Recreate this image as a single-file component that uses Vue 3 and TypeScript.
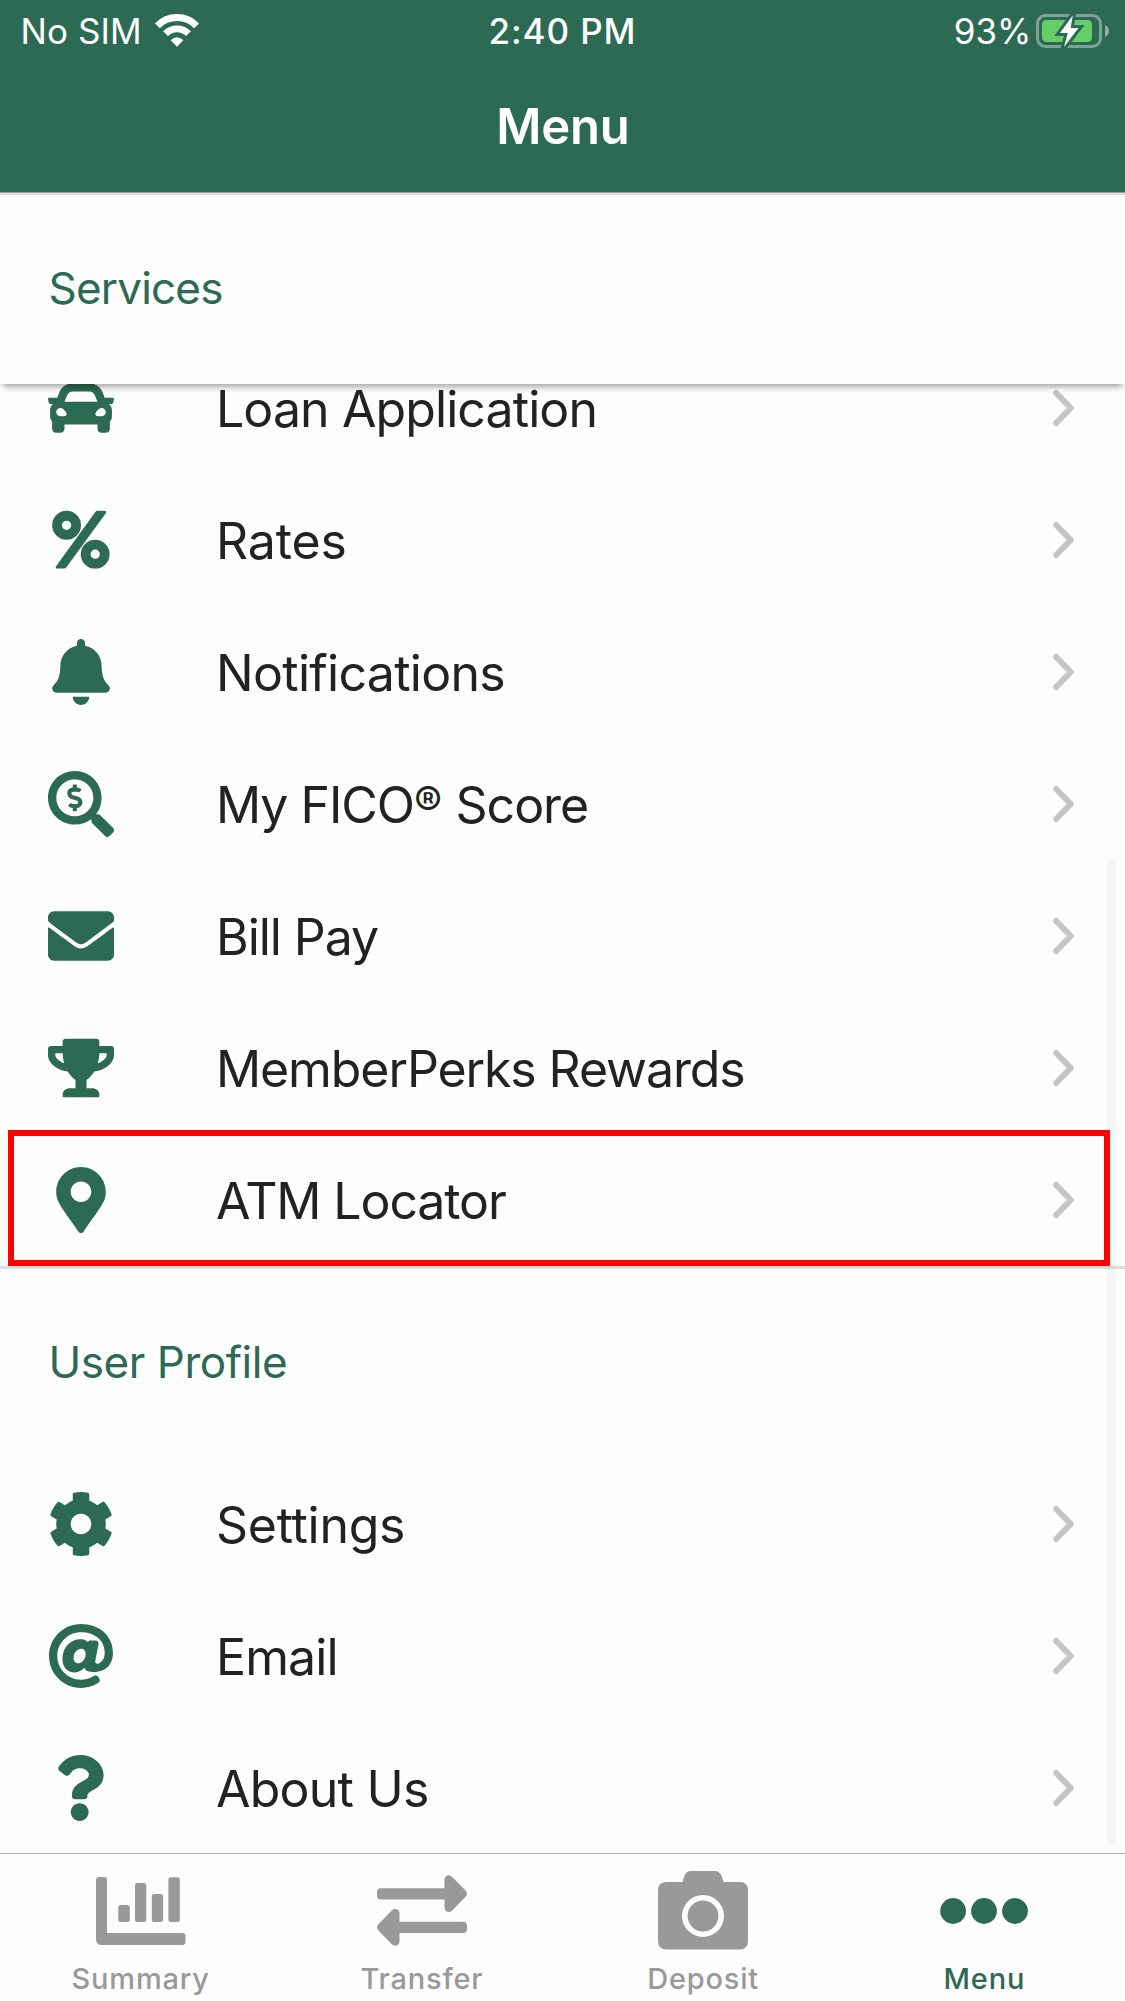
<script setup lang="ts">
interface MenuItem {
  label: string
  mark?: string
  rest?: string
  tracking: number
  viewBox: string
  paths: string[]
  highlighted?: boolean
}

const services: MenuItem[] = [
  {
    label: 'Loan Application',
    tracking: -0.9,
    viewBox: '0 0 512 512',
    paths: [
      'M499.99 176h-59.87l-16.64-41.6C406.38 91.63 365.57 64 319.5 64h-127c-46.06 0-86.88 27.63-103.99 70.4L71.87 176H12.01C4.2 176-1.53 183.34.37 190.91l6 24C7.7 220.25 12.5 224 18.01 224h20.07C24.65 235.73 16 252.78 16 272v48c0 16.12 6.16 30.67 16 41.93V416c0 17.67 14.33 32 32 32h32c17.67 0 32-14.33 32-32v-32h256v32c0 17.67 14.33 32 32 32h32c17.67 0 32-14.33 32-32v-54.07c9.84-11.25 16-25.8 16-41.93v-48c0-19.22-8.65-36.27-22.08-48H494c5.51 0 10.31-3.75 11.64-9.09l6-24c1.89-7.57-3.84-14.91-11.65-14.91zm-352.06-17.83c7.29-18.22 24.94-30.17 44.57-30.17h127c19.63 0 37.28 11.95 44.57 30.17L384 208H128l19.93-49.83zM96 319.8c-19.2 0-32-12.76-32-31.9S76.8 256 96 256s48 28.71 48 47.85-28.8 15.95-48 15.95zm320 0c-19.2 0-48 3.19-48-15.95S396.8 256 416 256s32 12.76 32 31.9-12.8 31.9-32 31.9z',
    ],
  },
  {
    label: 'Rates',
    tracking: -0.13,
    viewBox: '0 2 448 512',
    paths: [
      'M112 32a112 112 0 1 0 0 224a112 112 0 1 0 0-224zm0 76a36 36 0 1 1 0 72a36 36 0 1 1 0-72z',
      'M334 256a112 112 0 1 0 0 224a112 112 0 1 0 0-224zm0 76a36 36 0 1 1 0 72a36 36 0 1 1 0-72z',
      'M335 41Q342 32 353 32H405Q427 34 415 53L111 469Q104 480 93 480H42Q20 478 32 459Z',
    ],
  },
  {
    label: 'Notifications',
    tracking: -0.71,
    viewBox: '0 0 448 512',
    paths: [
      'M224 512c35.32 0 63.97-28.65 63.97-64H160.03c0 35.35 28.65 64 63.97 64zm215.39-149.71c-19.32-20.76-55.47-51.99-55.47-154.29 0-77.7-54.48-139.9-127.94-155.16V32c0-17.67-14.32-32-31.98-32s-31.98 14.33-31.98 32v20.84C118.56 68.1 64.08 130.3 64.08 208c0 102.3-36.15 133.53-55.47 154.29-6 6.45-8.66 14.16-8.61 21.71.11 16.4 12.98 32 32.1 32h383.8c19.12 0 32-15.6 32.1-32 .05-7.55-2.61-15.27-8.61-21.71z',
    ],
  },
  {
    label: 'My FICO',
    mark: '®',
    rest: ' Score',
    tracking: -1.05,
    viewBox: '0 0 512 512',
    paths: [
      'M505.04 442.66l-99.71-99.69c-4.5-4.5-10.6-7-17-7h-16.3c27.6-35.3 44-79.69 44-127.99C416.03 93.09 322.92 0 208.02 0S0 93.09 0 207.98s93.11 207.98 208.02 207.98c48.3 0 92.71-16.4 128.01-44v16.3c0 6.4 2.5 12.5 7 17l99.71 99.69c9.4 9.4 24.6 9.4 33.9 0l28.3-28.3c9.4-9.4 9.4-24.59.1-33.99zm-297.02-90.7c-79.54 0-144-64.34-144-143.98 0-79.53 64.35-143.98 144-143.98 79.54 0 144 64.34 144 143.98 0 79.53-64.35 143.98-144 143.98zm27.11-152.54l-45.01-13.5c-5.16-1.55-8.77-6.78-8.77-12.73 0-7.27 5.3-13.19 11.8-13.19h28.1c4.56 0 8.96 1.29 12.82 3.72 3.24 2.03 7.36 1.91 10.13-.73l11.75-11.21c3.53-3.37 3.33-9.21-.57-12.14-9.1-6.83-20.08-10.77-31.37-11.35V112c0-4.42-3.58-8-8-8h-16c-4.42 0-8 3.58-8 8v16.12c-23.63.63-42.68 20.55-42.68 45.07 0 19.97 12.99 37.81 31.58 43.39l45.01 13.5c5.16 1.55 8.77 6.78 8.77 12.73 0 7.27-5.3 13.19-11.8 13.19h-28.11c-4.56 0-8.96-1.29-12.82-3.72-3.24-2.03-7.36-1.91-10.13.73l-11.75 11.21c-3.53 3.37-3.33 9.21.57 12.14 9.1 6.83 20.08 10.77 31.37 11.35V304c0 4.42 3.58 8 8 8h16c4.42 0 8-3.58 8-8v-16.12c23.63-.63 42.68-20.54 42.68-45.07 0-19.97-12.99-37.81-31.59-43.39z',
    ],
  },
  {
    label: 'Bill Pay',
    tracking: -1.05,
    viewBox: '0 0 512 512',
    paths: [
      'M502.3 190.8c3.9-3.1 9.7-.2 9.7 4.7V400c0 26.5-21.5 48-48 48H48c-26.5 0-48-21.5-48-48V195.6c0-5 5.7-7.8 9.7-4.7 22.4 17.4 52.1 39.5 154.1 113.6 21.1 15.4 56.7 47.8 92.2 47.6 35.7.3 72-32.8 92.3-47.6 102-74.1 131.6-96.3 154-113.7zM256 320c23.2.4 56.6-29.2 73.4-41.4 132.7-96.3 142.8-104.7 173.4-128.7 5.8-4.5 9.2-11.5 9.2-18.9v-19c0-26.5-21.5-48-48-48H48c-26.5 0-48 21.5-48 48v19c0 7.4 3.4 14.3 9.2 18.9 30.6 23.9 40.7 32.4 173.4 128.7 16.8 12.2 50.2 41.8 73.4 41.4z',
    ],
  },
  {
    label: 'MemberPerks Rewards',
    tracking: -1.1,
    viewBox: '0 0 576 512',
    paths: [
      'M552 64H448V24c0-13.3-10.7-24-24-24H152c-13.3 0-24 10.7-24 24v40H24C10.7 64 0 74.7 0 88v56c0 35.7 22.5 72.4 61.9 100.7 31.5 22.7 69.8 37.1 110 41.7C203.3 338.5 240 360 240 360v72h-48c-35.3 0-64 20.7-64 56v12c0 6.6 5.4 12 12 12h296c6.6 0 12-5.4 12-12v-12c0-35.3-28.7-56-64-56h-48v-72s36.7-21.5 68.1-73.6c40.3-4.6 78.6-19 110-41.7 39.3-28.3 61.9-65 61.9-100.7V88c0-13.3-10.7-24-24-24zM99.3 192.8C74.9 175.2 64 155.6 64 144v-16h64.2c1 32.6 5.8 61.2 12.8 86.2-15.1-5.2-29.2-12.4-41.7-21.4zM512 144c0 16.1-17.7 36.1-35.3 48.8-12.5 9-26.7 16.2-41.8 21.4 7-25 11.8-53.6 12.8-86.2H512v16z',
    ],
  },
  {
    label: 'ATM Locator',
    tracking: -1.1,
    viewBox: '0 0 384 512',
    highlighted: true,
    paths: [
      'M172.268 501.67C26.97 291.031 0 269.413 0 192 0 85.961 85.961 0 192 0s192 85.961 192 192c0 77.413-26.97 99.031-172.268 309.67-9.535 13.774-29.93 13.773-39.464 0zM192 272c44.183 0 80-35.817 80-80s-35.817-80-80-80-80 35.817-80 80 35.817 80 80 80z',
    ],
  },
]

const profile: MenuItem[] = [
  {
    label: 'Settings',
    tracking: -0.29,
    viewBox: '0 0 512 512',
    paths: [
      'M487.4 315.7l-42.6-24.6c4.3-23.2 4.3-47 0-70.2l42.6-24.6c4.9-2.8 7.1-8.6 5.5-14-11.1-35.6-30-67.8-54.7-94.6-3.8-4.1-10-5.1-14.8-2.3L380.8 110c-17.9-15.4-38.5-27.3-60.8-35.1V25.8c0-5.6-3.9-10.5-9.4-11.7-36.7-8.2-74.3-7.8-109.2 0-5.5 1.2-9.4 6.1-9.4 11.7V75c-22.2 7.9-42.8 19.8-60.8 35.1L88.7 85.5c-4.9-2.8-11-1.9-14.8 2.3-24.7 26.7-43.6 58.9-54.7 94.6-1.7 5.4.6 11.2 5.5 14L67.3 221c-4.3 23.2-4.3 47 0 70.2l-42.6 24.6c-4.9 2.8-7.1 8.6-5.5 14 11.1 35.6 30 67.8 54.7 94.6 3.8 4.1 10 5.1 14.8 2.3l42.6-24.6c17.9 15.4 38.5 27.3 60.8 35.1v49.2c0 5.6 3.9 10.5 9.4 11.7 36.7 8.2 74.3 7.8 109.2 0 5.5-1.2 9.4-6.1 9.4-11.7v-49.2c22.2-7.9 42.8-19.8 60.8-35.1l42.6 24.6c4.9 2.8 11 1.9 14.8-2.3 24.7-26.7 43.6-58.9 54.7-94.6 1.5-5.5-.7-11.3-5.6-14.1zM256 336c-44.1 0-80-35.9-80-80s35.9-80 80-80 80 35.9 80 80-35.9 80-80 80z',
    ],
  },
  {
    label: 'Email',
    tracking: -0.9,
    viewBox: '0 0 512 512',
    paths: [
      'M256 8C118.941 8 8 118.919 8 256c0 137.058 110.919 248 248 248 48.154 0 95.342-14.14 135.408-40.223 12.005-7.815 14.625-24.288 5.552-35.372l-10.177-12.433c-7.671-9.371-21.179-11.667-31.373-5.129C325.92 429.757 291.314 440 256 440c-101.458 0-184-82.542-184-184S154.542 72 256 72c100.139 0 184 57.619 184 160 0 38.786-21.093 79.742-58.17 83.693-17.349-.454-16.91-12.857-13.476-30.024l23.433-121.11C394.653 149.75 383.308 136 368.225 136h-44.981a13.518 13.518 0 0 0-13.432 11.993l-.01.092c-14.697-17.901-40.448-21.775-59.971-21.775-74.58 0-137.831 62.234-137.831 151.46 0 65.303 36.785 105.87 96 105.87 26.984 0 57.369-15.637 74.991-38.333 9.522 34.104 40.613 34.104 70.71 34.104C462.609 379.41 504 307.798 504 232 504 95.653 394.023 8 256 8zm-21.68 304.43c-22.249 0-36.07-15.623-36.07-40.771 0-44.993 30.779-72.729 58.63-72.729 22.292 0 35.601 15.241 35.601 40.77 0 45.061-33.875 72.73-58.161 72.73z',
    ],
  },
  {
    label: 'About Us',
    tracking: -0.76,
    viewBox: '10 0 384 512',
    paths: [
      'M202.021 0C122.202 0 70.503 32.703 29.914 91.026c-7.363 10.58-5.093 25.086 5.178 32.874l43.138 32.709c10.373 7.865 25.132 6.026 33.253-4.148 25.049-31.381 43.63-49.449 82.757-49.449 30.764 0 68.816 19.799 68.816 49.631 0 22.552-18.617 34.134-48.993 51.164-35.423 19.86-82.299 44.576-82.299 106.405V320c0 13.255 10.745 24 24 24h72.471c13.255 0 24-10.745 24-24v-5.773c0-42.86 125.268-44.645 125.268-160.627C377.504 66.256 286.902 0 202.021 0zM192 373.459c-38.196 0-69.271 31.075-69.271 69.271 0 38.195 31.075 69.27 69.271 69.27s69.271-31.075 69.271-69.271-31.075-69.27-69.271-69.27z',
    ],
  },
]

const sections = [
  { title: 'Services', tracking: -0.8, pinned: true, items: services },
  { title: 'User Profile', tracking: -0.45, pinned: false, items: profile },
]
</script>

<template>
  <div class="screen">
    <header class="top">
      <div class="status">
        <div class="carrier">
          <span class="carrier-name">No SIM</span>
          <svg class="wifi" width="48" height="36" viewBox="0 0 48 36">
            <g fill="none" stroke="#fff" stroke-width="6.8">
              <path d="M4.4 12.8A27.3 27.3 0 0 1 43.6 12.8" />
              <path d="M12.5 20.7A16.2 16.2 0 0 1 35.5 20.7" />
            </g>
            <path d="M24 33.3L18.2 27.3Q24 22.4 29.8 27.3Z" fill="#fff" stroke="#fff" stroke-width="1" stroke-linejoin="round" />
          </svg>
        </div>
        <div class="time">2:40 PM</div>
        <div class="power">
          <span class="percent">93%</span>
          <svg class="battery" width="76" height="36" viewBox="0 0 76 36">
            <rect x="2.5" y="2.5" width="63" height="31" rx="8" fill="none" stroke="#7ba496" stroke-width="3" />
            <rect x="7" y="7" width="50" height="22" rx="4.5" fill="#67ce67" />
            <path d="M70 12Q74 14 74 18T70 24Z" fill="#8fb2a6" />
            <path d="M37.7 2.5L25 20H32.8L29 34L43.5 15H35.7Z" fill="#2d6a53" stroke="#2d6a53" stroke-width="6" stroke-miterlimit="10" />
            <path d="M37.7 2.5L25 20H32.8L29 34L43.5 15H35.7Z" fill="#fff" />
          </svg>
        </div>
      </div>
      <h1 class="title">Menu</h1>
    </header>

    <main class="content">
      <section v-for="section in sections" :key="section.title" class="section">
        <h2 class="heading" :class="{ pinned: section.pinned }" :style="{ letterSpacing: section.tracking + 'px' }">
          <span>{{ section.title }}</span>
        </h2>
        <ul class="list" :class="{ scrolled: section.pinned }">
          <li v-for="item in section.items" :key="item.label" class="row" :class="{ highlighted: item.highlighted }">
            <svg class="icon" :viewBox="item.viewBox">
              <path v-for="(d, i) in item.paths" :key="i" :d="d" />
            </svg>
            <span class="label" :style="{ letterSpacing: item.tracking + 'px' }">{{ item.label }}<span v-if="item.mark" class="mark">{{ item.mark }}</span>{{ item.rest }}</span>
            <svg class="chevron" width="22" height="38" viewBox="0 0 22 38">
              <path d="M3.2 4L17.8 19L3.2 34" />
            </svg>
          </li>
        </ul>
      </section>
      <div class="scrollbar"></div>
    </main>

    <nav class="tabs">
      <a class="tab">
        <svg width="90" height="90" viewBox="0 0 90 90">
          <path d="M0 14Q0 11 3 11H8Q11 11 11 14V67H86Q89.5 67 89.5 70V76Q89.5 79 86 79H6Q0 79 0 73Z" />
          <rect x="22.3" y="39" width="11.5" height="17" rx="2.5" />
          <rect x="39" y="17" width="11.3" height="39" rx="2.5" />
          <rect x="55.8" y="28" width="11.3" height="28" rx="2.5" />
          <rect x="72.4" y="11.2" width="11.4" height="44.8" rx="2.5" />
        </svg>
        <span>Summary</span>
      </a>
      <a class="tab">
        <svg width="90" height="90" viewBox="0 0 90 90">
          <path d="M4 22.2H67.5V14Q67.5 10 71.5 9.3Q73.5 9.3 75 10.7L88.8 24.8Q91 27.7 88.8 30.6L75 44.7Q73 46.3 71 46Q67.5 45 67.5 41.5V33.5H4Q0 33.5 0 29.5V26.2Q0 22.2 4 22.2Z" />
          <path d="M86 55.7H22.5V47.5Q22.5 43.5 18.5 42.9Q16.5 42.9 15 44.2L1.2 58.4Q-1 61.3 1.2 64.2L15 78.4Q17 80 19 79.7Q22.5 78.7 22.5 75V67H86Q90 67 90 63V59.7Q90 55.7 86 55.7Z" />
        </svg>
        <span>Transfer</span>
      </a>
      <a class="tab deposit">
        <svg width="90" height="90" viewBox="0 0 90 90">
          <path d="M24.5 16Q27 5 32 5H58Q63 5 65.5 16H81.5Q90 16 90 24.5V75Q90 83.5 81.5 83.5H8.5Q0 83.5 0 75V24.5Q0 16 8.5 16Z" />
          <circle cx="45" cy="50" r="18.2" fill="none" stroke="#fdfdfd" stroke-width="5.6" />
        </svg>
        <span>Deposit</span>
      </a>
      <a class="tab active">
        <svg width="90" height="90" viewBox="0 0 90 90">
          <circle cx="14.1" cy="45" r="12.9" />
          <circle cx="45" cy="45" r="12.9" />
          <circle cx="76" cy="45" r="12.9" />
        </svg>
        <span>Menu</span>
      </a>
    </nav>
  </div>
</template>

<style>
body {
  margin: 0;
  background: #fdfdfd;
}
</style>

<style scoped>
.screen {
  width: 1125px;
  height: 2001px;
  display: flex;
  flex-direction: column;
  overflow: hidden;
  background: #fdfdfd;
  color: #222;
  font-family: Inter, Roboto, sans-serif;
}
.top {
  height: 192px;
  flex: none;
  background: #2d6a53;
  color: #fff;
}
.status {
  display: grid;
  grid-template-columns: 1fr auto 1fr;
  align-items: center;
  height: 62px;
  font-size: 35px;
  line-height: 63px;
}
.carrier {
  display: flex;
  align-items: center;
  padding-left: 20.5px;
}
.carrier-name {
  letter-spacing: 0.1px;
}
.wifi {
  margin: -2px 0 0 11.5px;
}
.time {
  font-weight: 500;
  letter-spacing: 0.9px;
}
.power {
  display: flex;
  justify-content: flex-end;
  align-items: center;
  padding-right: 14px;
}
.battery {
  margin: -2px 0 0 3.5px;
}
.title {
  margin: 0;
  text-align: center;
  font-size: 49px;
  font-weight: 580;
  line-height: 60px;
  padding: 35px 0 0 1px;
  letter-spacing: -0.2px;
}
.content {
  position: relative;
  flex: 1;
  min-height: 0;
  overflow: hidden;
}
.heading {
  position: relative;
  box-sizing: border-box;
  height: 192px;
  margin: 0;
  padding: 3px 0 0 48.5px;
  border-top: 3px solid #dedede;
  display: flex;
  align-items: center;
  color: #2d6a53;
  font-size: 44px;
  font-weight: 400;
  line-height: 56px;
  background: #fdfdfd;
}
.heading span {
  margin-top: -6px;
}
.heading.pinned {
  z-index: 2;
  box-shadow: 0 6px 6px -3px rgba(0, 0, 0, 0.34);
}
.heading.pinned::before {
  content: '';
  position: absolute;
  left: 0;
  right: 0;
  top: -3px;
  height: 1px;
  background: #a09c9e;
}
.list {
  list-style: none;
  margin: 0;
  padding: 0;
}
.list.scrolled {
  margin-top: -42px;
}
.row {
  position: relative;
  display: flex;
  align-items: center;
  height: 132px;
  padding: 0 50px 0 48px;
}
.icon {
  width: 66px;
  height: 66px;
  flex: none;
  fill: #2d6a53;
}
.label {
  flex: 1;
  margin-left: 102px;
  padding-top: 2px;
  font-size: 50px;
  line-height: 60px;
  white-space: pre;
}
.mark {
  font-size: 42px;
  line-height: 1;
  position: relative;
  top: -6px;
  margin-right: 1.5px;
}
.chevron {
  flex: none;
  fill: none;
  stroke: #c4c4c6;
  stroke-width: 6;
  stroke-linecap: round;
  stroke-linejoin: round;
}
.highlighted::after {
  content: '';
  position: absolute;
  z-index: 4;
  left: 8px;
  right: 15px;
  top: -4px;
  bottom: 0;
  border: 6px solid #f00;
}
.scrollbar {
  position: absolute;
  z-index: 3;
  right: 9px;
  top: 667px;
  bottom: 8px;
  width: 9px;
  border-radius: 5px;
  background: rgba(0, 0, 0, 0.03);
}
.tabs {
  flex: none;
  box-sizing: border-box;
  height: 148px;
  border-top: 1px solid #b2b2b2;
  display: grid;
  grid-template-columns: 281.25px 281.25px 281.25px 281.25px;
  color: #999;
}
.tab {
  display: flex;
  flex-direction: column;
  align-items: center;
  padding-top: 12px;
  font-size: 29px;
  font-weight: 500;
  line-height: 36px;
  letter-spacing: 0.8px;
}
.tab svg {
  flex: none;
  fill: #999;
}
.tab span {
  margin-top: 5px;
}
.tab.active {
  color: #2d6a53;
}
.tab.active svg {
  fill: #2d6a53;
}
</style>
